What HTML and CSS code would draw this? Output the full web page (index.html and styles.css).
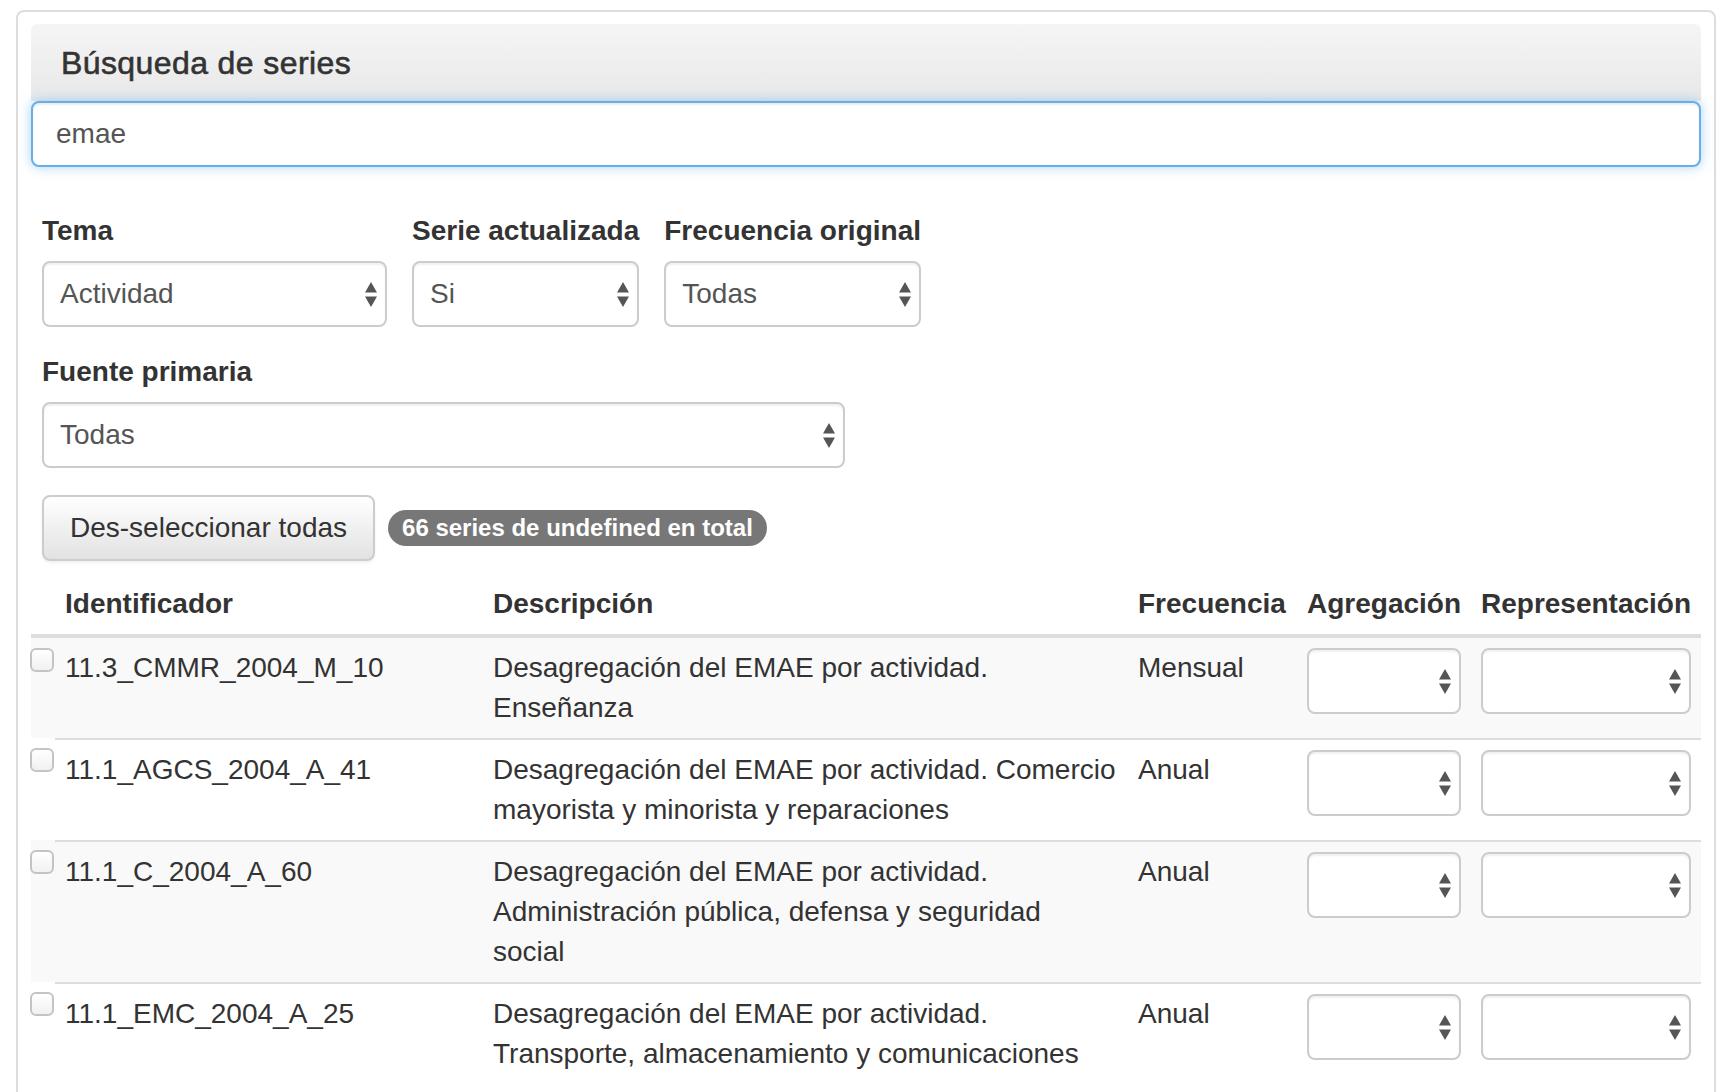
FILE: index.html
```html
<!DOCTYPE html>
<html lang="es">
<head>
<meta charset="utf-8">
<title>Búsqueda de series</title>
<link rel="stylesheet" href="styles.css">
</head>
<body>
<div class="panel">
  <div class="panel-heading"><h3 class="panel-title">Búsqueda de series</h3></div>
  <input class="search" type="text" value="emae">
  <div class="filters">
    <div class="filter-row">
      <div class="form-group w-tema">
        <label>Tema</label>
        <div class="select"><span>Actividad</span><svg class="caret" viewBox="0 0 12 25"><path d="M6 0 12 10.5H0z"/><path d="M0 14.5h12L6 25z"/></svg></div>
      </div>
      <div class="form-group">
        <label>Serie actualizada</label>
        <div class="select"><span>Si</span><svg class="caret" viewBox="0 0 12 25"><path d="M6 0 12 10.5H0z"/><path d="M0 14.5h12L6 25z"/></svg></div>
      </div>
      <div class="form-group">
        <label>Frecuencia original</label>
        <div class="select"><span>Todas</span><svg class="caret" viewBox="0 0 12 25"><path d="M6 0 12 10.5H0z"/><path d="M0 14.5h12L6 25z"/></svg></div>
      </div>
    </div>
    <div class="filter-row">
      <div class="form-group w-fuente">
        <label>Fuente primaria</label>
        <div class="select"><span>Todas</span><svg class="caret" viewBox="0 0 12 25"><path d="M6 0 12 10.5H0z"/><path d="M0 14.5h12L6 25z"/></svg></div>
      </div>
    </div>
    <div class="actions">
      <button class="btn" type="button">Des-seleccionar todas</button>
      <span class="badge">66 series de undefined en total</span>
    </div>
  </div>
  <table class="series">
    <colgroup>
      <col class="c-check"><col class="c-id"><col class="c-desc"><col class="c-frec"><col class="c-agr"><col class="c-rep">
    </colgroup>
    <thead>
      <tr><th></th><th>Identificador</th><th>Descripción</th><th>Frecuencia</th><th>Agregación</th><th>Representación</th></tr>
    </thead>
    <tbody>
      <tr>
        <td class="check"><span class="cb"></span></td>
        <td>11.3_CMMR_2004_M_10</td>
        <td>Desagregación del EMAE por actividad. Enseñanza</td>
        <td>Mensual</td>
        <td><div class="select"><span></span><svg class="caret" viewBox="0 0 12 25"><path d="M6 0 12 10.5H0z"/><path d="M0 14.5h12L6 25z"/></svg></div></td>
        <td><div class="select"><span></span><svg class="caret" viewBox="0 0 12 25"><path d="M6 0 12 10.5H0z"/><path d="M0 14.5h12L6 25z"/></svg></div></td>
      </tr>
      <tr>
        <td class="check"><span class="cb"></span></td>
        <td>11.1_AGCS_2004_A_41</td>
        <td>Desagregación del EMAE por actividad. Comercio mayorista y minorista y reparaciones</td>
        <td>Anual</td>
        <td><div class="select"><span></span><svg class="caret" viewBox="0 0 12 25"><path d="M6 0 12 10.5H0z"/><path d="M0 14.5h12L6 25z"/></svg></div></td>
        <td><div class="select"><span></span><svg class="caret" viewBox="0 0 12 25"><path d="M6 0 12 10.5H0z"/><path d="M0 14.5h12L6 25z"/></svg></div></td>
      </tr>
      <tr>
        <td class="check"><span class="cb"></span></td>
        <td>11.1_C_2004_A_60</td>
        <td>Desagregación del EMAE por actividad. Administración pública, defensa y seguridad social</td>
        <td>Anual</td>
        <td><div class="select"><span></span><svg class="caret" viewBox="0 0 12 25"><path d="M6 0 12 10.5H0z"/><path d="M0 14.5h12L6 25z"/></svg></div></td>
        <td><div class="select"><span></span><svg class="caret" viewBox="0 0 12 25"><path d="M6 0 12 10.5H0z"/><path d="M0 14.5h12L6 25z"/></svg></div></td>
      </tr>
      <tr>
        <td class="check"><span class="cb"></span></td>
        <td>11.1_EMC_2004_A_25</td>
        <td>Desagregación del EMAE por actividad. Transporte, almacenamiento y comunicaciones</td>
        <td>Anual</td>
        <td><div class="select"><span></span><svg class="caret" viewBox="0 0 12 25"><path d="M6 0 12 10.5H0z"/><path d="M0 14.5h12L6 25z"/></svg></div></td>
        <td><div class="select"><span></span><svg class="caret" viewBox="0 0 12 25"><path d="M6 0 12 10.5H0z"/><path d="M0 14.5h12L6 25z"/></svg></div></td>
      </tr>
    </tbody>
  </table>
</div>
</body>
</html>
```

FILE: styles.css
```css
* { box-sizing: border-box; }
html, body { margin: 0; background: #fff; }
body {
  font-family: "Liberation Sans", Arial, Helvetica, sans-serif;
  font-size: 28px;
  line-height: 40px;
  color: #333;
  overflow: hidden;
}
.panel {
  margin: 10px 16px 0 16px;
  border: 2px solid #ddd;
  border-bottom: none;
  border-radius: 8px 8px 0 0;
  padding: 12px 13px 0 13px;
  min-height: 1090px;
}
.panel-heading {
  height: 77px;
  padding: 0 30px;
  display: flex;
  align-items: center;
  background: linear-gradient(#f5f5f5, #e8e8e8);
  border-radius: 6px 6px 0 0;
}
.panel-title {
  margin: 0;
  font-size: 32px;
  font-weight: 400;
  letter-spacing: 0.4px;
  color: #333;
  -webkit-text-stroke: 0.6px #333;
}
.search {
  display: block;
  width: 100%;
  height: 66px;
  margin: 0;
  padding: 0 23px;
  border: 2px solid #66afe9;
  border-radius: 8px;
  font-family: inherit;
  font-size: 28px;
  color: #555;
  background: #fff;
  outline: none;
  box-shadow: inset 0 2px 2px rgba(0,0,0,.075), 0 0 12px rgba(102,175,233,.55);
}
.filters { padding: 44px 11px 0 11px; }
.filter-row {
  display: flex;
  align-items: flex-start;
  gap: 25px;
  margin-bottom: 25px;
}
.form-group {
  display: flex;
  flex-direction: column;
}
.form-group label {
  display: block;
  font-weight: bold;
  line-height: 40px;
  margin-bottom: 10px;
  white-space: nowrap;
}
.w-tema { width: 345px; }
.w-fuente { width: 803px; }
.select {
  height: 66px;
  border: 2px solid #ccc;
  border-radius: 8px;
  background: #fff;
  padding: 0 8px 0 16px;
  display: flex;
  align-items: center;
  justify-content: space-between;
  color: #555;
  box-shadow: inset 0 2px 2px rgba(0,0,0,.06);
}
.caret { width: 12px; height: 25px; flex: none; fill: #555; margin-left: 10px; }
.actions {
  display: flex;
  align-items: center;
  margin-top: 27px;
}
.btn {
  height: 66px;
  padding: 0 26px;
  font-family: inherit;
  font-size: 28px;
  color: #333;
  border: 2px solid #ccc;
  border-radius: 8px;
  background: linear-gradient(#fff, #e2e2e2);
  box-shadow: 0 2px 3px rgba(0,0,0,.06);
}
.badge {
  margin-left: 13px;
  background: #777;
  color: #fff;
  font-size: 24px;
  font-weight: bold;
  line-height: 24px;
  padding: 6px 14px;
  border-radius: 20px;
  white-space: nowrap;
}
.series {
  width: 100%;
  margin-top: 13px;
  border-collapse: separate;
  border-spacing: 0;
  table-layout: fixed;
}
.c-check { width: 24px; }
.c-id { width: 428px; }
.c-desc { width: 645px; }
.c-frec { width: 169px; }
.c-agr { width: 174px; }
.c-rep { width: 230px; }
.series th {
  text-align: left;
  font-weight: bold;
  padding: 10px;
  border-bottom: 4px solid #ddd;
  white-space: nowrap;
  vertical-align: bottom;
}
.series td {
  padding: 10px;
  vertical-align: top;
  border-top: 2px solid #ddd;
}
.series tbody tr:first-child td { border-top: none; }
.series tbody tr:nth-child(odd) { background: #f9f9f9; }
.series td.check {
  border-top: none;
  padding: 10px 0 0 0;
}
.cb {
  display: block;
  width: 24px;
  height: 24px;
  margin-left: -1px;
  border: 2px solid #c4c4c4;
  border-radius: 6px;
  background: linear-gradient(#fff, #f1f1f1);
}
```
